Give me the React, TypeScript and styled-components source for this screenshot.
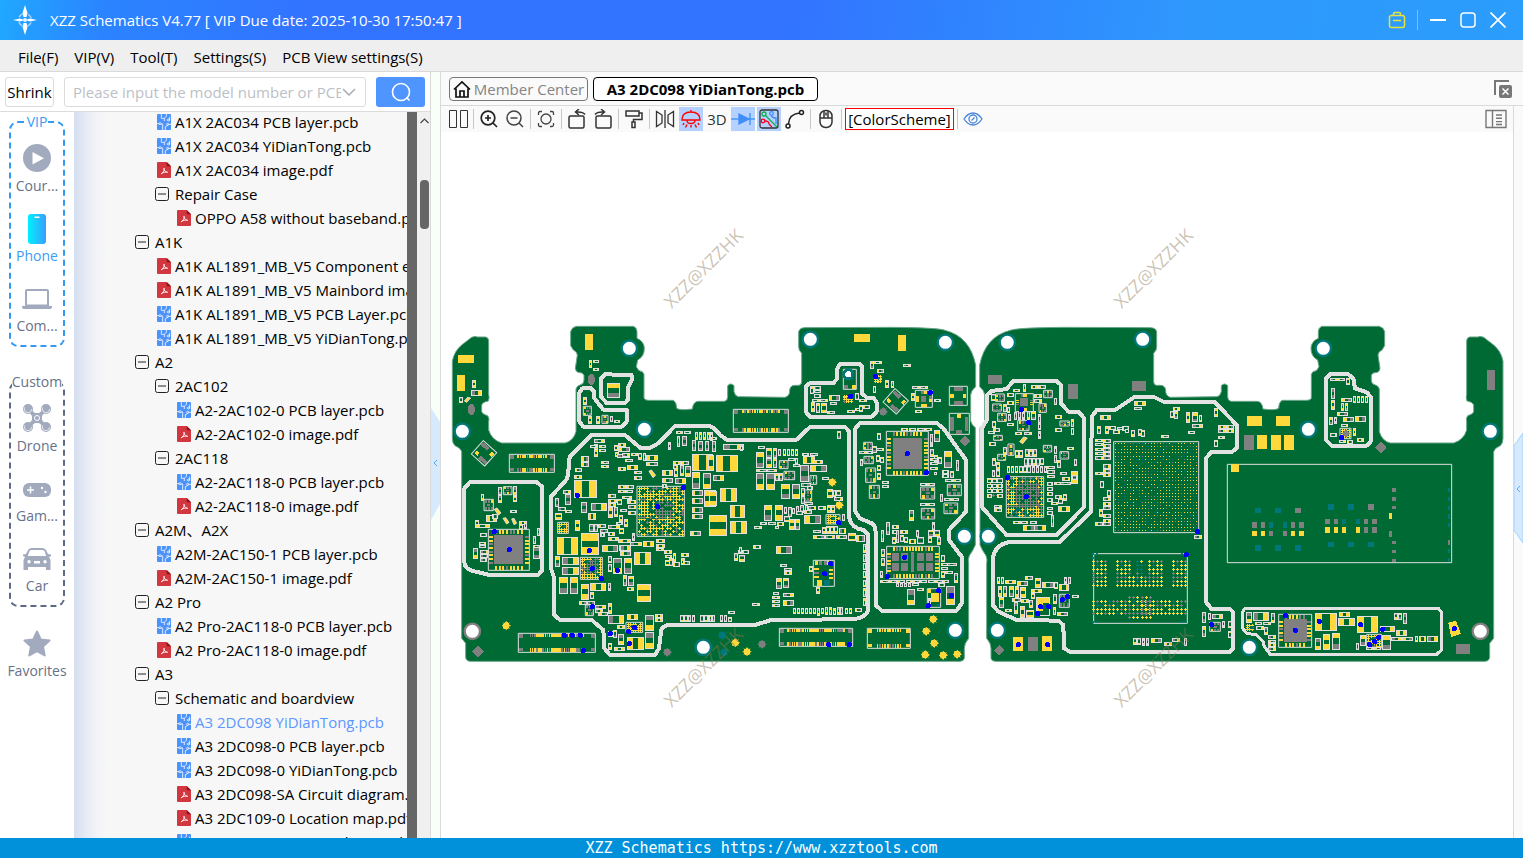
import React from "react";
import styled, { createGlobalStyle, css } from "styled-components";

const GlobalStyle = createGlobalStyle`
  * { box-sizing: border-box; }
  body { margin: 0; font-family: "Open Sans", "Noto Sans CJK SC", sans-serif; font-size: 15px; color: #000; background: #fff; }
  button, input { font: inherit; color: inherit; }
  button { padding: 0; border: 0; background: none; cursor: pointer; }
`;

/* ---------- frame ---------- */
const Window = styled.div`display: flex; flex-direction: column; height: 100vh; overflow: hidden;`;
const TitleBar = styled.header`
  display: flex; align-items: center; flex: none; height: 40px; padding: 0 15px 0 12px; color: #fff;
  background: linear-gradient(100deg, #20a8ff 0%, #2b84ff 7%, #3274ff 20%, #3274ff 52%, #2e98fd 78%, #2b9dfc 100%);
`;
const Title = styled.h1`flex: 1; margin: 0 0 0 12px; font-size: 15px; font-weight: 400; white-space: nowrap;`;
const WindowButtons = styled.div`display: flex; align-items: center; gap: 10px;`;
const WindowButton = styled.button`display: flex; width: 20px; height: 20px; align-items: center; justify-content: center;`;
const TitleRule = styled.span`width: 1px; height: 20px; background: #7cbdff;`;
const MenuBar = styled.nav`
  display: flex; align-items: center; flex: none; gap: 16px; height: 32px; padding: 2px 18px 0;
  background: #efefef; border-bottom: 1px solid #dadada;
`;
const MenuItem = styled.button`line-height: 24px; white-space: nowrap;`;
const Body = styled.div`display: flex; flex: 1; min-height: 0;`;
const Footer = styled.footer`
  flex: none; height: 20px; background: #0091da; color: #fff; text-align: center;
  font: 400 15px/20px "DejaVu Sans Mono", monospace;
`;

/* ---------- left panel ---------- */
const LeftPanel = styled.aside`display: flex; flex-direction: column; flex: none; width: 431px; border-right: 1px solid #dadada;`;
const SearchRow = styled.form`
  display: flex; align-items: center; flex: none; height: 40px; padding: 1px 5px 0; background: #fff; border-bottom: 1px solid #dcdcdc;
`;
const ShrinkButton = styled.button`width: 49px; height: 30px; border: 1px solid #dcdcdc; border-radius: 3px;`;
const SearchBox = styled.label`
  display: flex; align-items: center; flex: 1; height: 30px; margin: 0 10px; padding: 0 8px; border: 1px solid #dcdcdc; border-radius: 3px;
`;
const SearchInput = styled.input`
  flex: 1; min-width: 0; border: 0; padding: 0; outline: 0; background: none;
  &::placeholder { color: #bcbfc6; opacity: 1; }
`;
const SearchButton = styled.button`
  display: flex; align-items: center; justify-content: center; width: 49px; height: 30px; border-radius: 3px; background: #4f95ff;
`;
const LeftBody = styled.div`display: flex; flex: 1; min-height: 0;`;
const Categories = styled.div`flex: none; width: 74px; padding: 0 9px; background: #fff;`;
const Group = styled.fieldset<{ $active?: boolean }>`
  display: flex; flex-direction: column; gap: 13px; margin: 0 0 25px; padding: 7px 0 9px; min-width: 0;
  border: 2px dashed ${p => (p.$active ? "#3399f3" : "#5d6a85")}; border-radius: 9px;
  color: ${p => (p.$active ? "#3c9cf5" : "#67728a")};
`;
const Legend = styled.legend`margin: 0 auto; padding: 0; line-height: 20px; font-size: 14px;`;
const Category = styled.button<{ $active?: boolean }>`
  display: flex; flex-direction: column; align-items: center; gap: 4px; width: 100%; padding-top: 5px;
  font-size: 14px; line-height: 20px; white-space: nowrap; color: ${p => (p.$active ? "#3c9cf5" : "#67728a")};
  svg { flex: none; }
`;
const Favorites = styled.div`margin: -8px -9px 0;`;
const Tree = styled.ul`
  flex: 1; min-width: 0; margin: 0; padding: 0; list-style: none; overflow: hidden;
  background: linear-gradient(90deg, #d5dff0 0, #e6ebf4 12px, #f3f4f7 24px, #f7f7f7 34px);
`;
const Row = styled.li<{ $level: number }>`
  height: 24px; padding-left: ${p => 61 + p.$level * 20}px; overflow: hidden;
  &:first-child { margin-top: -1px; }
`;
const RowButton = styled.button<{ $selected?: boolean }>`
  display: flex; align-items: center; height: 22px; line-height: 22px; white-space: nowrap; color: ${p => (p.$selected ? "#5b98ff" : "#000")};
`;
const Slot = styled.span<{ $file?: boolean }>`display: flex; flex: none; width: 20px; padding-left: ${p => (p.$file ? 2 : 0)}px;`;
const DarkRail = styled.div`flex: none; width: 10px; background: #666;`;
const ScrollRail = styled.div`
  display: flex; flex-direction: column; align-items: center; flex: none; width: 13px; padding: 5px 0 0 1px; background: #f0f0f0;
`;
const Thumb = styled.div`width: 9px; height: 49px; margin-top: 54px; border-radius: 4px; background: #666;`;
const Strip = styled.div<{ $right?: boolean }>`
  flex: none; width: ${p => (p.$right ? 10 : 9)}px; padding-top: ${p => (p.$right ? 300 : 336)}px;
  background: ${p => (p.$right ? "#fafafa" : "#f8fff8")};
  ${p => p.$right && css`border-left: 1px solid #dadada;`}
`;
const Handle = styled.button`display: block; width: 9px;`;

/* ---------- viewer ---------- */
const Viewer = styled.main`display: flex; flex-direction: column; flex: 1; min-width: 0; border-left: 1px solid #dadada;`;
const Tabs = styled.div`
  display: flex; align-items: center; flex: none; gap: 5px; height: 34px; padding: 0 8px; background: #fafafa; border-bottom: 1px solid #dadada;
`;
const Tab = styled.button<{ $active?: boolean }>`
  display: flex; align-items: center; justify-content: center; gap: 3px; height: 24px; border: 1px solid ${p => (p.$active ? "#000" : "#777")};
  border-radius: 4px; color: ${p => (p.$active ? "#000" : "#858585")}; background: ${p => (p.$active ? "#fff" : "#fafafa")};
  font-weight: ${p => (p.$active ? 700 : 400)}; width: ${p => (p.$active ? 225 : 139)}px; white-space: nowrap;
`;
const Spacer = styled.span`flex: 1;`;
const ViewerBody = styled.div`display: flex; flex: 1; min-height: 0;`;
const Stage = styled.section`display: flex; flex-direction: column; flex: 1; min-width: 0;`;
const Toolbar = styled.div`
  display: flex; align-items: center; flex: none; gap: 2px; height: 26px; padding: 0 5px; background: #fafafa;
`;
const Tool = styled.button<{ $on?: boolean }>`
  display: flex; align-items: center; justify-content: center; width: 24px; height: 24px; color: #333; background: ${p => (p.$on ? "#b5d1ff" : "none")};
`;
const Sep = styled.span`width: 1px; height: 20px; margin: 0 1px; background: #c8c8c8;`;
const Scheme = styled.button`height: 22px; width: 109px; border: 1px solid #f00; background: #fff; line-height: 20px;`;
const Canvas = styled.div`flex: 1; min-height: 0; background: #fff; svg { display: block; width: 100%; height: 100%; }`;

/* ---------- icons ---------- */
const Svg = ({ s = 20, children, ...r }: any) => (
  <svg width={s} height={s} viewBox={`0 0 ${s} ${s}`} fill="none" stroke="currentColor" strokeWidth={1.5} aria-hidden="true" {...r}>{children}</svg>
);
const Logo = () => (
  <svg width={26} height={30} viewBox="0 0 26 30" aria-hidden="true">
    <path fill="#fff" d="M13 0 15.500 8 14.500 12h-3L10.500 8ZM13 30 15.500 22 14.500 18h-3L10.500 22ZM1 15 8 13.500 11 14.500v1L8 16.500ZM25 15 18 13.500 15 14.500v1L18 16.500Z" />
    <circle cx={13} cy={15} r={6.500} fill="none" stroke="#a5d4ff" strokeWidth={1.5} strokeDasharray="5 5.200" strokeDashoffset={-2.500} />
    <circle cx={13} cy={15} r={2} fill="#e6f3ff" />
  </svg>
);
const PcbFile = () => (
  <svg width={14} height={16} viewBox="0 0 42 48" aria-hidden="true">
    <rect width={42} height={48} rx={3} fill="#4c92fb" />
    <g fill="none" stroke="#fff" strokeWidth={2.4}>
      <path d="M13 0v13h9v8M0 29h6M12 30h5M17 48V30M28 0v7l-6 6M25 48V38l8-4M29 18h3M38 18V8M35 31h7" />
      <circle cx={9} cy={29} r={3} /><circle cx={35} cy={18} r={3} /><circle cx={32} cy={31} r={3} />
    </g>
  </svg>
);
const PdfFile = () => (
  <svg width={14} height={16} viewBox="0 0 42 48" aria-hidden="true">
    <path d="M3 0H29L42 13V45Q42 48 39 48H3Q0 48 0 45V3Q0 0 3 0Z" fill="#d2363f" />
    <path d="M29 0 42 13H32Q29 13 29 10Z" fill="#8e1119" />
    <path d="M20 19q3-2 2 4-1 7-10 13 2-3 9-5 8-2 11 0-7 0-11-8-2-3-1-4Z" fill="none" stroke="#fff" strokeWidth={2.6} />
  </svg>
);
const Minus = () => (
  <svg width={14} height={14} viewBox="0 0 14 14" fill="none" stroke="#222" aria-hidden="true"><rect x={0.5} y={0.5} width={13} height={13} rx={2} /><path d="M3 7h8" /></svg>
);
const G = "#a2aabe";
const CategoryIcon = ({ name }: { name: string }) => (
  <svg width={28} height={28} viewBox="0 0 28 28" fill={G} overflow="visible" aria-hidden="true">
    {name === "course" && <><circle cx={14} cy={14} r={14} /><path d="M9.5 8v12.500L21 14.200Z" fill="#fff" /></>}
    {name === "phone" && <><defs><linearGradient id="ph"><stop stopColor="#00f0ff" /><stop offset="1" stopColor="#3a9dff" /></linearGradient></defs>
      <rect x={5} width={18} height={30} rx={3} fill="url(#ph)" /><path d="M11.500 2.500h5v1.500h-5Z" fill="#fff" /></>}
    {name === "computer" && <><path fillRule="evenodd" d="M2 7q0-2 2-2H24q2 0 2 2V22H2ZM4 7V20.500H24V7Z" /><path d="M-1 22H29v1q0 2-2 2H1q-2 0-2-2Z" /></>}
    {name === "drone" && <><path d="M5 7 7 5l5 4h4l5-4 2 2-4 5v4l4 5-2 2-5-4h-4l-5 4-2-2 4-5v-4Z" />
      {[[5, 5], [23, 5], [5, 23], [23, 23]].map(([x, y]) => <g key={`${x}${y}`}><circle cx={x} cy={y} r={5} /><circle cx={x} cy={y} r={3.700} fill="none" stroke="#fff" strokeWidth={0.7} strokeDasharray="13 10" /></g>)}
      <circle cx={14} cy={14} r={2.500} stroke="#fff" /></>}
    {name === "game" && <><rect y={9} width={28} height={14} rx={6} /><path d="M4 16h7M7.500 12.500v7" stroke="#fff" strokeWidth={1.5} /><circle cx={19} cy={14} r={1.2} fill="#fff" /><circle cx={22.500} cy={18} r={1.2} fill="#fff" /></>}
    {name === "car" && <path fillRule="evenodd" transform="translate(0 2)" d="M0 8.500 3 8 5 4Q6 2 9 2H19Q22 2 23 4L25 8 28 8.500V10L26 11 27.500 14V24H23V21H5V24H.500V14L2 11 0 10ZM6.500 5 4.800 10H23.200L21.500 5Q21 4 19 4H9Q7 4 6.500 5ZM6 14a1.700 1.700 0 1 0 .1 0ZM22 14a1.700 1.700 0 1 0 .1 0ZM11 15v2.500h6V15Z" />}
    {name === "star" && <path stroke={G} strokeWidth={2} strokeLinejoin="round" transform="translate(0 1)" d="M14 1.500 17.700 9.500 26.500 10.500 20 16.500 21.700 25.500 14 21.200 6.300 25.500 8 16.500 1.500 10.500 10.300 9.500Z" />}
  </svg>
);

/* ---------- board drawing ---------- */
const Y = "#ffd83b", GR = "#808080", BD = "#006a35", SILK = "#e0e0e0", TEAL = "#00777b";
const tone: Record<string, string> = { y: Y, g: GR, t: TEAL, n: BD };

/* Two-pad parts: "x,y,w,h,pads[,axis]" separated by blanks. */
const Parts = ({ d }: { d: string }) => (
  <g>{d.trim().split(/\s+/).map((p, i) => {
    const a = p.split(","), [x, y, w, h] = a.map(Number), k = a[4] || "yy";
    const hor = a[5] ? a[5] === "h" : w > h;
    const t = 3, l = Math.round((hor ? w : h) * 0.34);
    return <g key={i}>
      <rect x={x} y={y} width={w} height={h} fill={SILK} />
      <rect x={x + t} y={y + t} width={w - t - t} height={h - t - t} fill={BD} />
      {hor ? <><rect x={x + t} y={y + t} width={l - t} height={h - t - t} fill={tone[k[0]]} /><rect x={x + w - l} y={y + t} width={l - t} height={h - t - t} fill={tone[k[1]]} /></>
        : <><rect x={x + t} y={y + t} width={w - t - t} height={l - t} fill={tone[k[0]]} /><rect x={x + t} y={y + h - l} width={w - t - t} height={l - t} fill={tone[k[1]]} /></>}
    </g>;
  })}</g>
);
/* Bare pads: "x,y,w,h,tone". */
const Pads = ({ d }: { d: string }) => (
  <g>{d.trim().split(/\s+/).map((p, i) => { const a = p.split(","); return <rect key={i} x={a[0]} y={a[1]} width={a[2]} height={a[3]} fill={tone[a[4] || "y"]} />; })}</g>
);
const Frame = ({ x, y, w, h }: any) => <rect x={x} y={y} width={w} height={h} fill={BD} stroke={SILK} strokeWidth={3} />;
const noise = (i: number, j: number) => { const v = Math.sin(i * 12.9898 + j * 78.233) * 43758.5453; return v - Math.floor(v); };
const Qfn = ({ x, y, w, h, n, m = n, die = true, pad = 6, len = 12, seed = 1 }: any) => {
  const c = (i: number, s: number) => (noise(i + seed, s) > 0.72 ? GR : Y);
  const cells: any[] = [];
  for (let i = 0; i < n; i++) { const px = x + 18 + ((w - 36) * (i + 0.5)) / n - pad / 2;
    cells.push(<rect key={`a${i}`} x={px} y={y + 2} width={pad} height={len} fill={c(i, 1)} />, <rect key={`b${i}`} x={px} y={y + h - len - 2} width={pad} height={len} fill={c(i, 2)} />); }
  for (let i = 0; i < m; i++) { const py = y + 18 + ((h - 36) * (i + 0.5)) / m - pad / 2;
    cells.push(<rect key={`c${i}`} x={x + 2} y={py} width={len} height={pad} fill={c(i, 3)} />, <rect key={`d${i}`} x={x + w - len - 2} y={py} width={len} height={pad} fill={c(i, 4)} />); }
  return <g><Frame x={x} y={y} w={w} h={h} />{cells}{die && <rect x={x + w * 0.15} y={y + h * 0.15} width={w * 0.7} height={h * 0.7} fill={GR} />}</g>;
};
/* Four- to eight-pin packages: "x,y,w,h". */
const Small = ({ d }: { d: string }) => <g>{d.trim().split(/\s+/).map((p, i) => {
  const [x, y, w, h] = p.split(",").map(Number);
  return <g key={i}><Frame x={x} y={y} w={w} h={h} />
    {[0.08, 0.4, 0.72].map((f, j) => <g key={j}><rect x={x + w * f} y={y + 2} width={w * 0.2} height={h * 0.26} fill={(i + j) % 3 ? GR : Y} /><rect x={x + w * f} y={y + h * 0.7} width={w * 0.2} height={h * 0.26} fill={(i + j) % 4 ? GR : Y} /></g>)}
    <rect x={x + w * 0.36} y={y + h * 0.42} width={w * 0.3} height={h * 0.16} fill={GR} /></g>;
})}</g>;
/* Ball grids. Balls snap to a 3-unit lattice, so that each keeps the same weight. */
const snap = (v: number) => Math.floor(v / 3) * 3;
const Bga = ({ x, y, w, h, nx, ny, dot = false, mix = 0.2, teal = 0.04, core = 0, gap = 0.06, frame = true }: any) => {
  const d: Record<string, string> = { [Y]: "", [GR]: "", [TEAL]: "" };
  for (let i = 0; i < nx; i++) for (let j = 0; j < ny; j++) {
    const v = noise(i + 3, j + 7); if (v < gap) continue;
    const inner = Math.hypot(i / (nx - 1) - 0.55, j / (ny - 1) - 0.45) < core;
    const c = inner || v > 1 - mix ? GR : v < gap + teal ? TEAL : Y;
    const px = snap(x + 6 + ((w - 12) * i) / (nx - 1)), py = snap(y + 6 + ((h - 12) * j) / (ny - 1));
    d[c] += dot ? `M${px} ${py}h3v3h-3Z` : `M${px - 3} ${py}h9v3h-9ZM${px} ${py - 3}h3v9h-3Z`;
  }
  return <g>{frame && <Frame x={x} y={y} w={w} h={h} />}{Object.entries(d).map(([c, p]) => <path key={c} d={p} fill={c} />)}</g>;
};
const Connector = ({ x, y, w, h, n, ends = GR, edge = 18 }: any) => <g><Frame x={x} y={y} w={w} h={h} />
  {Array.from({ length: n }, (_, i) => { const px = Math.round(x + edge + 8 + ((w - 2 * edge - 20) * i) / (n - 1));
    return <g key={i}><rect x={px} y={y + 2} width={5} height={10} fill={noise(i, x) > 0.75 ? GR : Y} /><rect x={px} y={y + h - 12} width={5} height={10} fill={noise(i, y) > 0.7 ? GR : Y} /></g>; })}
  {[x + 2, x + w - 14].map(px => <g key={px} fill={ends}><rect x={px} y={y + 3} width={12} height={10} /><rect x={px} y={y + h - 13} width={12} height={10} /></g>)}
</g>;
const Dots = ({ d, r = 8, fill = "#0000ff" }: any) => <g fill={fill}>{d.trim().split(/\s+/).map((p: string, i: number) => { const [x, y] = p.split(","); return <circle key={i} cx={x} cy={y} r={r} />; })}</g>;
const Star = ({ d, fill = Y }: any) => <g fill={fill} stroke={fill}>{d.trim().split(/\s+/).map((p: string, i: number) => { const [x, y] = p.split(",").map(Number); return <g key={i}><circle cx={x} cy={y} r={10} /><path strokeWidth={3} d={`M${x - 13} ${y}h26M${x} ${y - 13}v26M${x - 9} ${y - 9}l18 18M${x + 9} ${y - 9}l-18 18`} /></g>; })}</g>;
const Holes = ({ d, ring = TEAL }: any) => <g fill="#fff" stroke={ring} strokeWidth={7}>{d.trim().split(/\s+/).map((p: string, i: number) => { const [x, y] = p.split(","); return <circle key={i} cx={x} cy={y} r={23} />; })}</g>;
const Tilted = ({ x, y }: any) => <g transform={`translate(${x} ${y}) rotate(42)`}><Frame x={-27} y={-27} w={54} h={54} /><rect x={-24} y={-22} width={26} height={11} fill={GR} transform="translate(0 -1)" /><rect x={-2} y={12} width={26} height={11} fill={GR} /><rect x={-22} y={8} width={12} height={10} fill={Y} /><rect x={14} y={-20} width={10} height={12} fill={Y} /></g>;

const OUTLINE = "M22 138Q28 108 50 90L80 67Q90 62 98 66H122Q131 68 131 78V238Q134 248 130 258Q110 262 110 272V290Q112 298 128 302Q134 310 131 322V345Q140 375 170 384H360Q385 378 393 350V222Q396 212 405 210Q417 208 417 195V180Q412 172 399 172Q391 168 391 160L397 120Q396 110 385 105L377 92V50Q380 36 395 34H565Q576 38 576 50V70Q598 80 598 100Q598 125 578 135L574 155Q580 170 592 170L597 178V250Q600 256 610 256H685Q695 262 695 280Q705 287 742 282Q745 259 760 259H838Q848 257 848 245V212Q857 202 867 212V230Q870 243 880 245L1020 247Q1035 243 1034 225Q1036 211 1050 211H1062Q1070 209 1070 200V115Q1060 105 1061 95V50Q1064 38 1080 38L1335 37Q1480 38 1500 46Q1575 65 1592 150V215Q1577 228 1577 240V318Q1580 330 1591 338V690Q1585 705 1573 722Q1568 735 1571 745V970Q1558 985 1558 1000V1030Q1556 1039 1545 1039H75Q62 1037 62 1025V985L50 970V410Q48 400 30 392Q22 385 22 370Z";

const SheetA = () => <g>
  <Pads d="420,57,24,48 39,120,48,24 36,180,24,48" />
  <ellipse cx={79} cy={284} rx={11} ry={17} fill={GR} /><ellipse cx={439} cy={194} rx={11} ry={17} fill={GR} />
  <Connector x={193} y={418} w={135} h={54} n={13} edge={16} />
  <Connector x={220} y={955} w={231} h={57} n={26} edge={26} />
  <Qfn x={130} y={643} w={123} h={123} n={8} />
  <Tilted x={117} y={415} />
  <Bga x={576} y={514} w={142} h={150} nx={16} ny={17} mix={0.18} teal={0.07} core={0.2} gap={0.14} />
  <Bga x={406} y={727} w={66} h={66} nx={8} ny={8} core={0.38} />
  <Bga x={338} y={622} w={32} h={33} nx={4} ny={4} mix={0} />
  <Bga x={543} y={922} w={50} h={30} nx={6} ny={4} mix={0.1} />
  <Small d="415,274,24,27 117,553,28,34 471,301,18,24 175,515,26,24 421,870,24,32" />
  <Parts d="80,194,14,25,yy 78,226,33,16,gy 41,247,12,18,gy 432,135,10,23,yy 443,136,20,8,yt 443,160,20,8,yy
  485,204,39,46,yg,v 413,247,13,23,yy 429,304,12,23,yy 453,304,12,23,yy 494,304,9,18,gg 506,315,20,8,yy
  388,495,67,55,yy,h 409,562,18,31,gg 437,563,48,24,gy 337,666,63,53,yy,h 408,655,53,64,yy,v 471,690,49,22,yg 523,691,36,16,yy
  351,727,50,22,gy 351,757,50,24,gy 342,786,26,50,yg 375,786,23,50,yg 408,807,23,47,yy 435,804,49,23,yy 330,724,16,31,yg
  503,729,27,47,gy 537,729,23,47,yg 568,711,49,40,yy,h 577,808,40,52,yy,v 489,900,48,26,gy 546,897,32,17,yy 600,899,26,48,gy 600,951,26,50,gy 546,965,50,41,yy,h
  741,418,63,49,yy,h 741,471,24,50,yg 773,474,24,48,gy 778,525,34,50,yy,v 792,600,22,64,yy,v 740,525,33,17,yg 740,550,33,17,yg 740,577,33,16,yg 740,597,33,16,yg 735,648,33,16,yg
  651,465,32,18,yy 651,489,32,16,yg 690,489,32,17,gy 704,451,14,33,gy 720,453,17,32,gy 686,460,12,26,yy 651,508,14,12,yy
  447,372,32,13,gy 447,387,13,20,yy 435,391,22,9,gy 463,389,20,9,yg 447,402,13,24,yy 461,403,22,9,yg
  506,390,12,18,yy 519,384,24,11,yy 519,397,36,13,yg 509,412,14,14,yy 515,418,40,10,gy 531,415,24,12,gy 558,414,20,10,yy 580,414,10,20,gy 593,414,11,24,gg 604,420,34,17,yy 603,441,36,12,yg 539,432,24,10,yg
  408,423,24,18,yg 408,441,24,14,yg 468,438,24,10,yg 468,450,24,10,yy 390,460,20,11,yg 387,481,24,11,yy 519,456,24,12,yy 546,450,32,14,yy 567,468,24,10,yg 567,484,24,11,yg
  354,526,24,11,gy 361,538,16,31,gg 330,549,12,28,gg 340,576,24,11,gg 360,584,20,10,yg 330,594,20,20,yy 390,615,16,32,yy 428,594,26,20,yy 519,510,24,11,yy 519,524,24,11,yy 543,510,24,11,yg 543,524,22,11,yg
  489,537,24,11,yg 489,552,26,12,yy 489,565,24,11,yy 516,552,14,17,yg 531,543,30,10,yy 546,553,14,14,yy 550,555,24,12,yy 550,570,24,12,gy 550,588,24,12,yg 490,575,13,34,yy 507,576,13,31,gy 525,582,22,10,yg 522,600,12,20,yy 537,612,12,24,yy 489,630,36,12,gy 513,621,22,10,yy 522,640,14,18,yy 489,651,20,12,yy 489,666,34,13,yy 519,672,40,12,yy
  432,628,14,22,gg 447,628,12,22,gg 459,627,24,12,yg 465,642,24,12,gg 465,655,15,10,yy 556,680,36,14,gy 561,655,9,23,yy 525,690,32,17,gy 525,709,32,13,yg 594,678,32,18,yy
  633,672,26,13,yy 633,686,26,13,yy 633,699,24,10,yy 657,706,24,12,yy 660,720,22,10,yy 660,735,14,18,yy 672,730,12,24,yg 684,715,10,26,yy 708,715,24,12,yy 708,730,12,20,yy 714,738,20,12,yg 684,741,22,14,yg
  489,724,12,20,gy 489,748,12,24,gy 533,780,14,32,yg 549,782,17,30,yg 546,816,20,12,yy 489,804,9,24,gy 434,832,12,20,yg 402,858,24,12,yg 426,858,24,12,gg 450,870,34,12,gy 450,883,24,12,gy 460,890,30,12,yg 489,864,12,32,yy
  489,947,14,20,yg 505,944,12,24,yg 519,957,18,32,gy 489,984,12,20,yy 507,995,34,13,yy 516,930,24,12,yy
  90,615,12,22,yy 90,627,46,12,yy 122,600,34,20,yy 107,537,10,20,gy 159,516,12,24,gg 159,540,12,24,gy 204,514,12,28,gy 204,542,12,18,yy 195,585,22,10,yy 222,618,24,12,yy 222,628,12,18,yy 236,624,9,18,gy 105,654,22,12,gg 102,680,22,10,gy 102,690,22,10,gg 105,706,26,12,gy 106,718,24,10,gg 106,729,20,12,gy 84,699,14,32,gy 264,663,9,24,gg 264,690,20,10,yg 264,697,21,34,gg 276,640,9,22,gg 140,598,18,14,yg
  630,897,24,12,yy 630,909,24,12,yy 705,899,12,22,gy 717,899,12,22,gy 729,899,10,22,yy 740,899,9,22,yg 765,899,12,22,gg 777,899,12,22,gy 790,899,12,22,gg
  693,348,20,10,yy 717,348,22,10,gy 697,362,9,33,gg 712,364,15,30,gg 740,375,13,34,gg 760,379,13,30,gg 780,379,13,30,gg 750,352,9,22,gy 762,352,9,22,yg 774,352,9,22,gy 787,352,9,22,yg 670,382,9,22,yy 684,437,24,12,yy 708,437,24,12,yg 684,450,14,12,gy" />
  <g fill={Y} stroke={SILK} strokeWidth={3}><path d="M58 258 68 247 77 249 65 262ZM148 583 156 579 168 594 160 600ZM174 610 182 608 192 622 185 627ZM200 612 207 610 215 625 207 629ZM612 469 619 465 632 481 624 488Z" /></g>
  <Star d="184,932" /><Star d="667,1012" fill={GR} /><path d="M100 992 118 1010 100 1028 82 1010Z" fill={GR} />
  <Dots d="148,650 193,704 397,541 715,518 638,575 433,707 442,761 470,791 517,766 442,875 496,956 551,950 569,938 553,986 358,961 382,961 406,961 415,1007" />
</g>;

const SheetB = () => <g>
  <Pads d="432,57,48,24 564,60,24,48" />
  <Connector x={70} y={283} w={165} h={69} n={16} /><Connector x={208} y={940} w={220} h={54} n={27} edge={16} /><Connector x={472} y={940} w={129} h={60} n={10} ends={Y} edge={20} />
  <Qfn x={529} y={349} w={126} h={132} n={9} /><Qfn x={530} y={694} w={158} h={97} n={13} m={6} die={false} seed={4} />
  <Pads d="545,713,22,25,g 572,713,22,25,g 620,713,22,25,g 648,713,22,25,g 545,743,22,25,g 572,743,22,25,g 620,743,22,25,g 648,743,22,25,g 602,710,10,60,g" />
  <Frame x={310} y={736} w={63} h={78} /><Pads d="316,738,9,12 328,738,9,12,g 341,738,9,12,g 352,738,9,12 313,758,14,6 313,770,14,6,g 313,782,14,6 356,762,14,6 356,774,14,6 356,786,14,6 322,796,14,16 341,796,9,16,t 352,796,9,16,t" />
  <Qfn x={616} y={226} w={51} h={51} n={2} len={8} pad={9} die={false} /><rect x={633} y={243} width={16} height={18} fill={GR} />
  <Frame x={718} y={214} w={54} h={57} /><Pads d="732,216,26,12,g 732,257,26,12,g 721,236,10,14 759,236,10,14" />
  <Frame x={718} y={295} w={60} h={63} /><Pads d="721,306,10,42,g 765,306,10,42,g 741,297,11,12 737,346,20,12,g" />
  <Tilted x={557} y={259} />
  <Frame x={400} y={163} w={39} h={60} /><Pads d="402,210,12,12,g 425,210,12,12" />
  <Bga x={397} y={237} w={32} h={28} nx={4} ny={4} mix={0.2} frame={false} /><Bga x={490} y={178} w={28} h={28} nx={4} ny={4} mix={0} frame={false} /><Bga x={348} y={599} w={42} h={28} nx={5} ny={4} mix={0.1} />
  <Small d="461,382,26,22 462,424,28,22 467,459,30,43 478,511,30,39 632,516,42,36 712,508,42,34 702,564,41,32 634,580,40,32 208,437,26,24 222,469,32,25 283,525,22,33 300,482,20,26" />
  <Frame x={652} y={821} w={40} h={56} /><Pads d="663,834,24,27 654,823,8,10 681,823,8,10 654,866,8,9,t 681,866,8,9,t" />
  <Parts d="18,420,65,52,yy,h -6,420,17,48,yy,v 30,520,50,40,yy,h 61,570,45,40,yy,h -2,527,24,47,yy,v -4,600,54,64,yy,v 60,617,50,39,yy,h 9,480,32,17,gy 6,378,12,32,gg 38,388,63,18,gy 0,352,10,26,yy 4,366,16,9,yy 90,388,10,20,yy
  139,411,24,48,yg 139,474,24,50,gy 168,474,26,50,gy 169,399,18,30,yg 188,399,14,30,yg 169,428,18,30,gy 188,428,14,30,yg 144,393,22,9,gg 163,570,24,47,yg 194,570,24,47,yy 214,507,25,46,yg 246,507,24,46,gy 271,450,25,52,gg 280,424,34,22,yy 300,450,50,22,yg 283,600,50,27,yg 238,612,17,32,yy 255,612,15,32,yg
  139,462,32,10,yg 171,462,30,10,gy 205,402,9,22,gg 218,402,9,22,gy 230,402,9,22,gg 242,402,9,22,yg 256,402,9,22,yy 256,428,9,18,gg 196,475,10,22,yg 208,475,10,22,yg 233,430,22,9,gg 250,448,20,9,gg 276,413,22,9,yy 300,413,24,9,gg 310,436,30,11,yy 336,486,22,9,gg 272,505,30,10,gg 273,520,12,22,gy 273,544,12,22,gg 292,512,16,12,gy 283,560,26,10,gg
  222,576,10,22,gy 233,576,12,30,gg 245,578,10,20,gg 258,574,10,24,gg 270,571,12,22,gg 284,571,10,22,gg 295,574,24,10,gy 323,574,24,10,gy 258,588,22,11,gg 283,586,22,10,yg 223,602,16,20,gy 132,632,24,9,gy 149,621,22,9,yy 173,621,24,9,gg 200,621,22,11,yy 196,632,12,9,gy
  350,523,20,27,yy 368,524,10,22,gy 378,524,14,18,yg 373,546,26,11,gy 352,571,12,22,yy 364,571,12,22,yy 396,596,9,22,gg 310,645,22,10,gg 336,636,12,20,yy 349,632,10,24,yy 360,632,12,24,yy 373,632,12,24,gy 388,638,20,18,gy 310,659,34,14,yg 344,659,32,14,gy 378,659,33,14,yg 414,655,24,24,yy 438,659,28,22,yg
  459,687,9,28,gy 459,718,9,22,gg 459,743,9,22,gg 459,768,9,22,gy 459,795,9,22,gy 459,820,9,26,yg 459,850,9,24,yg
  72,714,12,24,gy 84,705,12,12,yg 88,695,9,20,gg 96,705,22,12,yg 86,720,18,20,gy 130,690,24,11,yy 198,693,47,23,yg 210,747,20,9,yg 222,760,24,9,gg 222,768,24,11,yy 199,789,16,34,yg 219,789,17,30,yg 188,832,20,9,gg 186,843,24,9,yy 186,856,24,9,yg 186,868,24,9,yg 219,834,32,13,gy 219,856,32,16,yg 126,865,24,9,gy 54,888,22,9,yg 42,900,10,22,gg 30,900,10,22,gy 54,906,12,14,yg 6,900,10,20,gg -4,900,9,20,yg
  249,880,9,18,gy 260,880,9,18,gy 272,880,9,18,gy 284,880,9,18,gg 297,880,9,18,gy 310,880,9,18,gy 322,880,9,22,gy 334,880,9,18,gy 344,877,9,22,gy 356,877,9,22,yg 368,880,9,20,yg 380,877,9,22,gy 391,877,9,22,gg 404,880,9,18,yg 416,880,9,18,yy 434,880,22,10,yg 297,752,12,20,yy 318,816,11,20,yy 381,347,11,24,yg
  480,138,12,24,yg 489,138,26,9,yy 501,162,20,11,yg 579,148,24,9,gy 526,196,10,22,yy 542,199,9,20,gy 489,213,10,22,gg 300,214,11,24,yg 312,214,22,11,gg 312,226,22,9,gg 312,237,22,11,ty 305,252,24,9,gy 330,252,24,9,gy 356,240,33,17,yg 303,262,12,28,yy 318,264,12,30,yg 333,264,18,30,yy 352,287,22,9,yg 360,262,20,9,gg 434,234,12,22,gg 446,252,24,9,yy 434,278,24,9,yg 447,270,12,22,yy 459,270,22,12,yg 410,284,24,9,yy
  501,354,12,20,yt 572,338,22,9,yy 597,338,22,9,yg 620,338,24,9,yg 645,338,22,9,yy 672,346,17,34,yg 659,357,9,38,gy 603,234,12,24,yy 606,213,24,10,gy 630,213,24,10,gy 614,285,22,9,yy 672,252,22,9,yy
  446,408,26,10,gy 470,408,18,10,gy 486,393,14,20,yg 499,398,24,10,gy 499,420,12,22,yy 511,426,12,18,yg 450,432,9,20,yg 501,449,12,18,yy 501,474,12,20,yy 515,498,22,9,gy 515,510,22,9,gy 659,402,12,24,gy 671,420,14,22,yy 659,430,26,9,yg 659,442,24,9,yg 659,456,24,9,gy 672,471,10,9,yy 684,426,12,20,yg 703,408,22,50,yg 738,435,10,32,gg 696,465,22,11,yy 696,477,22,11,yy 720,468,12,20,yg 706,493,24,9,gy 730,493,24,9,yg 630,505,22,9,gy 652,505,22,9,yg 690,538,9,22,gg 702,550,22,9,gy 724,550,22,9,yg 630,565,22,9,gy 652,565,24,9,yg 598,586,14,32,gy
  514,645,9,36,gg 527,622,12,38,gg 546,630,20,11,yy 546,645,20,11,yy 559,645,9,40,gg 571,645,22,11,yy 569,660,12,22,yg 583,667,12,18,gy 596,672,22,14,yy 618,645,9,20,yg 620,666,22,22,gg 666,622,9,24,yg 655,645,16,20,yg 672,645,18,20,gy 655,667,11,18,yy 680,667,12,22,gy 546,667,12,20,yy 514,703,11,22,gy 514,730,12,22,gy 692,720,12,22,gy 692,744,22,9,yg 692,756,22,9,gg 710,744,30,9,gg 692,768,14,20,yy 706,768,24,9,yg 510,768,10,20,gy 732,774,11,30,gy
  510,794,26,9,yg 536,794,26,9,yg 562,794,24,9,yg 587,794,20,9,gy 607,794,22,9,yg 630,794,22,9,yg 653,794,22,9,gg 676,794,22,9,yg 698,794,20,9,yg 557,805,9,12,gg 569,805,9,12,gg 581,805,9,12,gy 593,805,9,12,gg 605,805,22,9,gg 683,805,22,12,yg 592,823,22,48,gy 620,820,22,9,gy 709,814,27,57,gy 654,850,9,20,yg" />
  <Star d="367,502 388,571 76,983 111,1010 670,913 649,949 673,985 646,1019 700,1021 742,1018" />
  <Star d="37,961 42,1012 -4,996" fill={TEAL} /><Star d="156,988 520,290" fill={GR} /><path d="M765 362 781 378 765 394 749 378Z" fill={GR} />
  <circle cx={415} cy={178} r={18} fill={TEAL} /><circle cx={415} cy={178} r={9} fill="#fff" />
  <Dots d="497,185 422,244 661,233 592,416 649,473 386,623 362,746 344,776 584,727 532,785 686,827 724,842 655,872 356,989 418,989" />
</g>;

const SheetC = () => <g>
  <Pads d="39,180,42,27,g 279,207,30,45,g 471,198,42,30,g 114,966,30,42 159,966,30,42,g 201,963,30,45 " />
  <Qfn x={121} y={236} w={54} h={54} n={3} len={9} pad={5} die={false} /><rect x={135} y={249} width={24} height={24} fill={GR} />
  <Bga x={94} y={485} w={112} h={122} nx={13} ny={14} mix={0.24} teal={0.1} core={0.38} />
  <Bga x={416} y={380} w={255} h={273} nx={28} ny={29} dot mix={0.18} teal={0.2} gap={0.05} />
  <Frame x={356} y={716} w={281} h={209} />
  <Bga x={350} y={734} w={48} h={82} nx={4} ny={7} mix={0.4} frame={false} gap={0} />
  <Bga x={421} y={734} w={48} h={82} nx={4} ny={7} mix={0.3} frame={false} gap={0} /><Bga x={481} y={734} w={24} h={70} nx={2} ny={6} teal={0.7} frame={false} gap={0} />
  <Bga x={517} y={734} w={48} h={82} nx={4} ny={7} mix={0.4} frame={false} gap={0} /><Bga x={590} y={734} w={48} h={82} nx={4} ny={7} mix={0.3} frame={false} gap={0} />
  <Bga x={469} y={782} w={48} h={34} nx={4} ny={3} mix={0.3} frame={false} gap={0} />
  <Bga x={350} y={853} w={288} h={48} nx={24} ny={4} mix={0.25} teal={0.08} frame={false} gap={0.01} /><Bga x={457} y={841} w={76} h={72} nx={6} ny={6} mix={0.5} frame={false} gap={0} />
  <Pads d="352,714,6,6,t 364,714,6,6,t 618,714,6,6,t 352,917,6,6,t 364,917,6,6,t 618,917,6,6,t 630,917,6,6,t 352,726,6,6,t" />
  <Small d="62,237,26,22 53,267,26,21 68,295,26,24 128,317,34,30 192,266,22,26 206,226,26,22 56,361,26,15 255,318,28,15 205,391,25,20 255,410,26,22 68,418,24,18 99,387,18,34 704,922,32,27 253,838,30,39" />
  <Bga x={40} y={490} w={44} h={56} nx={4} ny={5} frame={false} />
  <Parts d="143,207,9,23,gy 168,210,20,11,yy 190,210,22,11,yg 113,222,22,9,yy 48,237,14,22,gy 95,234,22,11,yg 95,258,22,12,yy 84,267,12,24,yg 96,275,10,18,gy 237,249,9,20,tg 178,237,22,11,yy 178,252,22,11,gy 117,291,9,24,gg 130,289,9,26,gy 142,289,9,26,yy 155,289,9,26,gy 168,289,14,26,yg 189,297,10,26,yg 189,322,10,24,yy 189,348,10,24,yy 240,300,22,12,yy 240,338,22,12,yg 288,312,9,24,yg 288,338,9,22,gg 99,297,9,20,yg 51,318,12,22,yy 55,338,20,12,yg 39,348,22,9,gy 42,382,22,10,yg 119,352,22,9,yy 148,352,22,9,gy 96,324,22,9,gy
  84,397,11,22,gy 120,404,12,24,yy 133,404,12,24,yy 149,402,12,24,gy 162,402,12,24,yg 175,402,12,24,gy 148,428,11,24,gg 160,428,11,24,gg 172,428,11,24,gy 184,428,11,24,gg 196,428,11,22,gy 96,452,10,22,yg 108,452,10,22,yg 120,452,10,22,gy 133,452,10,22,gy 145,452,10,22,gy 157,452,10,22,gg 170,452,10,22,yg 182,452,10,22,yg 194,452,10,22,yg 206,452,10,22,yy 215,452,24,10,yg 215,466,24,10,gg 215,480,24,10,yg 237,394,9,24,yg 237,420,9,24,gg 51,430,12,24,yg 62,442,12,22,yy 51,465,10,22,yg 64,465,10,22,gy 275,395,22,10,yy 297,432,9,22,gy 245,435,12,24,yg 255,470,22,11,yg 262,487,24,10,yy 288,468,20,38,yy 291,480,14,14,gg 238,500,22,11,yg 255,500,32,9,gg
  215,500,20,14,gy 215,516,20,13,gg 215,531,20,13,yg 215,548,20,13,gy 228,560,22,11,yy 215,575,20,11,gg 215,588,20,11,gg 228,600,9,36,gg 240,540,20,11,gy 250,548,14,20,yg 264,537,12,20,yy 249,573,36,17,yy 57,570,24,10,gy 57,580,24,10,yg 113,617,24,10,yy 138,617,22,10,gy 165,617,22,10,gy 143,629,36,18,yg 178,629,34,18,gy
  36,489,14,16,yg 36,506,14,14,gy 36,521,14,14,yg 36,536,14,12,yg 52,489,14,16,yy 52,506,14,14,yy 52,521,14,14,yy 67,489,16,16,gy 67,506,16,14,yy 67,521,16,14,yg 67,536,16,12,yg
  375,300,32,14,yy 367,333,10,24,yg 390,333,12,24,yy 402,333,22,11,yg 414,345,22,11,gy 426,335,24,9,gy 441,333,22,14,yg 451,342,12,12,gg 468,345,11,20,gy 489,342,12,20,gy 498,345,12,22,yg 478,258,34,14,yy 477,276,24,9,gg 585,288,11,22,gy 598,288,11,24,yg 594,276,20,12,yy 634,292,11,31,yy 651,292,18,30,yg 671,300,10,22,gy 651,326,32,12,gy 558,360,24,9,yg 639,348,22,9,yg 717,280,11,25,yy 729,330,24,11,yy 753,330,24,11,yg 729,342,24,11,gy 753,342,24,11,yy 729,364,20,9,yy 717,375,11,21,yg
  360,372,26,9,yy 384,372,24,12,yg 360,384,26,9,gy 384,386,24,12,yg 360,398,26,9,yy 384,400,24,10,gg 360,411,26,10,yg 384,411,24,12,yg 360,424,26,10,gy 384,424,24,10,gg 384,447,24,15,gy 384,462,24,12,yg 360,471,24,9,yy 384,474,24,12,yy 376,497,10,22,gg 396,525,11,22,gy 384,545,24,14,gy 384,560,24,12,yy 384,572,24,12,gg 372,582,11,24,yy 384,597,24,13,yg 384,612,24,13,yy 360,620,24,12,yg 384,620,24,12,gg 657,660,24,11,gy
  65,786,9,20,gy 77,786,9,20,gg 90,795,32,11,yy 126,797,33,16,yg 150,784,24,10,yg 180,789,18,29,yy 201,801,36,17,yg 237,801,12,22,gy 252,807,30,22,yy 267,786,10,20,yy 279,786,9,20,gg 68,812,14,34,yy 83,814,14,32,gy 102,814,14,32,yg 120,814,12,36,yy 135,817,17,32,yy 168,822,34,12,yy 111,850,26,11,yg 138,852,24,11,yy 73,845,14,33,yg 90,882,20,9,yy 117,862,12,34,gy 135,872,15,36,yy 154,884,22,24,yy 162,855,12,24,gy 168,833,12,18,yy 234,836,12,32,gy 234,877,10,22,yg 246,892,32,11,yg 290,840,22,9,gy 184,845,40,57,yn,v
  474,969,11,20,gy 486,969,11,22,gy 500,969,10,24,yy 513,969,10,24,gy 528,969,32,14,yg 568,982,22,10,yy 592,969,22,11,gy 627,969,10,24,gg 681,892,13,32,gg 698,894,10,20,gg 711,897,32,15,gy 681,933,13,32,yg 741,918,10,20,gy 759,918,11,22,gy 759,948,11,22,yg" />
  <g fill={Y} stroke={SILK} strokeWidth={3}><path d="M134 380 146 366 157 369 143 386Z" /></g><path d="M73 990 89 1006 73 1022 57 1006Z" fill={GR} />
  <Pads d="187,862,18,27" />
  <Dots d="139,284 161,323 97,488 154,545 668,650 634,719 197,875 221,875 188,896 262,854 278,845 130,989 218,989 710,929" />
</g>;

const SheetD = () => <g>
  <Pads d="21,303,45,30 108,303,42,30 12,360,30,45,g 51,360,30,42 93,360,30,45 132,360,30,45 741,165,24,60,g 648,987,42,30,g" />
  <rect x={-38} y={448} width={673} height={295} fill="none" stroke={SILK} strokeWidth={3} />
  <Pads d="-28,448,26,22 45,579,18,15,t 105,579,18,15,t 165,579,18,15,g 36,621,15,18,g 63,621,12,18,g 87,621,12,18,t 129,621,12,18,t 153,621,12,18,g 177,621,15,18,g 36,648,15,15 63,648,12,15 87,648,12,15,g 129,648,12,15,g 153,648,12,15 177,648,15,15 45,690,18,18,t 105,690,18,18,t 165,690,18,18,t
  264,567,18,18,t 324,567,18,18,t 384,567,18,18,g 255,612,15,15,g 282,612,12,15,g 306,612,12,15,t 348,612,12,15,t 372,612,12,15,g 396,612,15,15,g 255,636,15,18 282,636,12,18 306,636,12,18 348,636,12,18 372,636,12,18,g 396,636,15,18,g 264,681,18,15,t 324,681,18,15,t 384,681,18,15,t
  456,519,12,12,g 456,546,12,12,g 456,573,12,9,g 447,594,9,18 447,648,9,18,g 456,678,12,9,g 456,705,12,9,g 456,732,12,9,g 624,519,6,12,t 624,546,6,12,t 624,573,6,12,t 624,597,6,14,t 624,624,6,12,t 624,675,6,15,g 624,702,6,12,t 624,729,6,12,t" />
  <Qfn x={116} y={898} w={99} h={99} n={6} /><Bga x={380} y={958} w={44} h={42} nx={5} ny={5} mix={0.2} /><Bga x={300} y={340} w={33} h={31} nx={4} ny={4} mix={0} />
  <Bga x={16} y={924} w={26} h={26} nx={3} ny={3} mix={0} frame={false} />
  <path d="M318 345 330 357 318 369 306 357ZM423 380 440 397 423 415 406 397Z" fill={GR} />
  <Parts d="270,188,24,9,gy 292,188,22,9,yg 317,188,13,22,yy 273,219,12,32,gg 273,254,12,31,yy 303,249,32,11,yg 338,243,10,22,gy 350,243,10,22,yg 362,243,10,22,yg 374,243,10,22,yg 303,264,10,23,gy 315,264,9,23,yg 290,291,33,11,yg 309,306,33,16,yg 345,303,33,17,yg 268,306,11,23,yg 281,306,10,20,yy 303,328,22,9,gy 339,339,9,23,yy 270,354,22,11,gy 351,369,20,11,yy 297,375,20,9,gy 320,375,18,11,yg
  18,890,17,34,gy 38,890,49,28,gy 93,894,11,31,gy 45,922,22,9,yg 68,922,24,9,gy 47,933,24,11,gy 72,936,11,23,gy 84,961,23,11,gy 84,974,23,11,yg 84,985,23,11,yy 84,996,23,11,gy 225,894,66,53,yy,h 297,892,33,14,yy 294,908,50,24,yy 249,958,21,46,yy 276,953,23,51,yg 225,970,18,34,gy 351,903,63,50,yy,h 420,934,44,18,yy 426,961,27,45,yg 361,961,16,32,yg 347,983,10,22,gg 468,945,32,17,yy 462,894,12,20,gy 474,894,12,20,yg 488,894,12,32,gg 453,966,34,11,gy 486,966,34,11,yg 525,962,10,18,gy 537,962,22,18,yy 561,963,32,17,gy 378,997,24,9,gy 403,997,20,9,yg" />
  <path d="M625 923 648 917 663 957 633 966Z" fill={Y} />
  <Dots d="305,368 136,902 166,946 238,919 362,929 428,943 416,967 404,980 389,989 643,941" />
</g>;

const Board = () => (
  <svg viewBox="441 132 1072 706" role="img" aria-label="A3 2DC098 board view" shapeRendering="crispEdges">
    <g transform="translate(445 315) scale(.33333)" strokeLinejoin="round">
      <g fill={BD} stroke="#69a78a" strokeWidth={3} shapeRendering="auto"><path d={OUTLINE} /><path d={OUTLINE} transform="translate(3196 0) scale(-1 1)" /></g>
      <SheetA />
      <g transform="translate(795 0)"><SheetB /></g>
      <g transform="translate(1590 0)"><SheetC /></g>
      <g transform="translate(2385 0)"><SheetD /></g>
      <g fill="none" stroke="#e2e2e2" strokeWidth={12}>
        <path d="M75 501H275L292 516V765L280 779H130L80 767Q58 760 58 740V520Z M480 178L560 180V195L548 220V255L540 264H485L468 245V190Z M402 235L412 220H438L448 230V250L475 284H545V320L530 335H415L402 318Z" />
        <path d="M318 545L350 510Q370 495 370 470L374 425L440 360H540L585 398H615L640 385L690 333H795Q810 340 825 360L845 374H1055L1095 336H1200L1213 350V610Q1220 640 1255 645L1270 660V885Q1265 905 1230 912L975 916L930 930H670Q648 934 648 950L642 1000L630 1020H495L478 1000L475 945L440 915H345L328 900V790L318 760Z" />
        <path transform="translate(795 0)" d="M287 215L300 204H370L382 190V160L390 147H450L456 155V235L470 248H490L500 262V290L485 305H300L287 290Z M436 340L450 324H680L700 340L768 435V590L717 645V675L755 725V865L740 887H515L497 870V650Q495 625 480 623L450 610L436 590Z" />
        <path transform="translate(1590 0)" d="M50 228L95 222L115 198H245L258 210V265L280 290H310L328 310V575L245 660H95L20 575V340L36 315V240Z M350 305L365 285H420L480 245H535L565 260L720 262L785 330V400L770 411H710L692 430V860L710 882H765L775 892V1000L765 1010H285L267 1000L265 930L250 917L125 915L70 890L53 870V730Q60 690 100 682L255 680L348 590Z" />
        <path transform="translate(2385 0)" d="M270 178H325L340 190L345 220L380 232L392 245V380L380 392H275L258 375V190Z" />
        <path strokeWidth={9} transform="translate(2385 0)" d="M15 880H595L604 890V1005L590 1018H90L70 990V980L50 960L20 955L8 940V890Z" />
      </g>
      <g shapeRendering="auto">
        <Holes d="52,349 553,100 598,343 775,997 1096,73 1501,82 1558,664 1531,946 1687,82 2093,73 1630,664 1657,946 2413,997 2635,100 2590,343 3136,349" />
        <Holes d="82,949 3106,949" ring={GR} />
      </g>
    </g>
    <g fill="#8c7a5c" fillOpacity={0.45} fontSize={18} textAnchor="middle" shapeRendering="auto">
      {[[703, 268], [1153, 268], [703, 667], [1153, 667]].map(([x, y]) => <text key={`${x}-${y}`} transform={`translate(${x + 5} ${y + 5}) rotate(-45)`}>XZZ@XZZHK</text>)}
    </g>
  </svg>
);

/* ---------- data ---------- */
type Node = [level: number, kind: "pcb" | "pdf" | "dir", name: string];
const NODES: Node[] = [
  [1, "pcb", "A1X 2AC034 PCB layer.pcb"], [1, "pcb", "A1X 2AC034 YiDianTong.pcb"], [1, "pdf", "A1X 2AC034 image.pdf"],
  [1, "dir", "Repair Case"], [2, "pdf", "OPPO A58 without baseband.pdf"], [0, "dir", "A1K"],
  [1, "pdf", "A1K AL1891_MB_V5 Component exploded.pdf"], [1, "pdf", "A1K AL1891_MB_V5 Mainbord image.pdf"],
  [1, "pcb", "A1K AL1891_MB_V5 PCB Layer.pcb"], [1, "pcb", "A1K AL1891_MB_V5 YiDianTong.pcb"],
  [0, "dir", "A2"], [1, "dir", "2AC102"], [2, "pcb", "A2-2AC102-0 PCB layer.pcb"], [2, "pdf", "A2-2AC102-0 image.pdf"],
  [1, "dir", "2AC118"], [2, "pcb", "A2-2AC118-0 PCB layer.pcb"], [2, "pdf", "A2-2AC118-0 image.pdf"],
  [0, "dir", "A2M、A2X"], [1, "pcb", "A2M-2AC150-1 PCB layer.pcb"], [1, "pdf", "A2M-2AC150-1 image.pdf"],
  [0, "dir", "A2 Pro"], [1, "pcb", "A2 Pro-2AC118-0 PCB layer.pcb"], [1, "pdf", "A2 Pro-2AC118-0 image.pdf"],
  [0, "dir", "A3"], [1, "dir", "Schematic and boardview"], [2, "pcb", "A3 2DC098 YiDianTong.pcb"], [2, "pcb", "A3 2DC098-0 PCB layer.pcb"],
  [2, "pcb", "A3 2DC098-0 YiDianTong.pcb"], [2, "pdf", "A3 2DC098-SA Circuit diagram.pdf"], [2, "pdf", "A3 2DC109-0 Location map.pdf"], [2, "pcb", "A3 DC-0AC173-0 PCB layer.pcb"],
];
const SELECTED = "A3 2DC098 YiDianTong.pcb";

export default function App() {
  return (
    <Window>
      <GlobalStyle />
      <TitleBar>
        <Logo />
        <Title>XZZ Schematics V4.77 [ VIP Due date: 2025-10-30 17:50:47 ]</Title>
        <WindowButtons>
          <WindowButton aria-label="Account"><Svg s={18} stroke="#e6e23c"><rect x={1.500} y={4.500} width={15} height={12} rx={2} /><path d="M5.500 4.500V3q0-1.500 1.500-1.500h4q1.500 0 1.500 1.500v1.500M5 9.500h8" /></Svg></WindowButton>
          <TitleRule />
          <WindowButton aria-label="Minimize"><Svg s={16} strokeWidth={2}><path d="M0 8h16" /></Svg></WindowButton>
          <WindowButton aria-label="Maximize"><Svg s={16} strokeWidth={1.5}><rect x={1} y={1} width={14} height={14} rx={3} /></Svg></WindowButton>
          <WindowButton aria-label="Close"><Svg s={16} strokeWidth={1.7}><path d="M.500.500l15 15M15.500.500l-15 15" /></Svg></WindowButton>
        </WindowButtons>
      </TitleBar>
      <MenuBar>{["File(F)", "VIP(V)", "Tool(T)", "Settings(S)", "PCB View settings(S)"].map(m => <MenuItem key={m}>{m}</MenuItem>)}</MenuBar>
      <Body>
        <LeftPanel>
          <SearchRow onSubmit={e => e.preventDefault()}>
            <ShrinkButton type="button">Shrink</ShrinkButton>
            <SearchBox>
              <SearchInput aria-label="Model number or PCB" placeholder="Please input the model number or PCB" />
              <Svg s={16} stroke="#a9abb2"><path d="M2 5l6 6 6-6" /></Svg>
            </SearchBox>
            <SearchButton aria-label="Search"><Svg s={20} stroke="#fff" strokeWidth={1.6}><circle cx={10} cy={10} r={8.500} /><path d="M15.500 15.500l3 3" /></Svg></SearchButton>
          </SearchRow>
          <LeftBody>
            <Categories>
              <Group $active><Legend>VIP</Legend>
                <Category><CategoryIcon name="course" />Cour...</Category>
                <Category $active><CategoryIcon name="phone" />Phone</Category>
                <Category><CategoryIcon name="computer" />Com...</Category>
              </Group>
              <Group><Legend>Custom</Legend>
                <Category><CategoryIcon name="drone" />Drone</Category>
                <Category><CategoryIcon name="game" />Gam...</Category>
                <Category><CategoryIcon name="car" />Car</Category>
              </Group>
              <Favorites><Category><CategoryIcon name="star" />Favorites</Category></Favorites>
            </Categories>
            <Tree>
              {NODES.map(([level, kind, name]) => (
                <Row key={name} $level={level}>
                  <RowButton $selected={name === SELECTED}>
                    <Slot $file={kind !== "dir"}>{kind === "dir" ? <Minus /> : kind === "pcb" ? <PcbFile /> : <PdfFile />}</Slot>{name}
                  </RowButton>
                </Row>
              ))}
            </Tree>
            <DarkRail />
            <ScrollRail><Svg s={9} stroke="#444" strokeWidth={1.2}><path d="M.500 6l4-4 4 4" /></Svg><Thumb /></ScrollRail>
          </LeftBody>
        </LeftPanel>
        <Strip><Handle aria-label="Collapse file list"><svg width={9} height={112} viewBox="0 0 9 112" aria-hidden="true"><path d="M0 0 9 14V96L0 112Z" fill="#d6e9fd" /><path d="M6 52 3 55l3 3" fill="none" stroke="#5aa9f0" /></svg></Handle></Strip>
        <Viewer>
          <Tabs>
            <Tab><Svg s={18} stroke="#111" strokeWidth={1.7}><path d="M1 9.500 9 2l8 7.500M3 8.500V17h12V8.500M7 17v-6h4v6" /></Svg>Member Center</Tab>
            <Tab $active>A3 2DC098 YiDianTong.pcb</Tab>
            <Spacer />
            <Tool aria-label="Close all tabs"><Svg s={20} stroke="#777" strokeWidth={2}><path d="M2 16V2h14" /><rect x={6} y={6} width={13} height={13} rx={2} fill="#777" stroke="none" /><path d="M9.500 9.500l6 6M15.500 9.500l-6 6" stroke="#fff" strokeWidth={1.5} /></Svg></Tool>
          </Tabs>
          <ViewerBody>
            <Stage>
              <Toolbar>
                <Tool aria-label="Split view"><Svg stroke="#333" strokeWidth={1}><path d="M1.500 1.500h7v17h-7ZM12.500 1.500h7v17h-7Z" /></Svg></Tool><Sep />
                <Tool aria-label="Zoom in"><Svg stroke="#222" strokeWidth={1.7}><circle cx={9} cy={9} r={6.800} /><path d="M14 14l4 4M6 9h6M9 6v6" /></Svg></Tool>
                <Tool aria-label="Zoom out"><Svg stroke="#444"><circle cx={9} cy={9} r={7} /><path d="M14 14l4 4M5.500 9h7" /></Svg></Tool><Sep />
                <Tool aria-label="Fit to window"><Svg stroke="#444" strokeWidth={1.3}><path d="M2.500 6V4q0-1.500 1.500-1.500h2M14 2.500h2q1.500 0 1.500 1.500v2M17.500 14v2q0 1.500-1.500 1.500h-2M6 17.500H4q-1.500 0-1.500-1.500v-2" /><circle cx={10} cy={10} r={5} /></Svg></Tool><Sep />
                <Tool aria-label="Rotate left"><Svg stroke="#333"><rect x={2} y={7} width={15} height={12} rx={1.500} /><path d="M18 5.500Q16 2.500 9 3M12 0 8.500 3 12 6" /></Svg></Tool>
                <Tool aria-label="Rotate right"><Svg stroke="#333"><rect x={3} y={7} width={15} height={12} rx={1.500} /><path d="M2 5.500Q4 2.500 11 3M8 0l3.500 3L8 6" /></Svg></Tool><Sep />
                <Tool aria-label="Format"><Svg stroke="#333"><path d="M2 2h13v5H2ZM15 4h3v6.500H9.500V13M8 13h3v5.500H8Z" /></Svg></Tool><Sep />
                <Tool aria-label="Mirror"><Svg stroke="#333" strokeWidth={1.3}><path d="M1.500 2.500v15L7 14V6ZM18.500 2.500v15L13 14V6ZM10 1v18" /></Svg></Tool>
                <Tool $on aria-label="Lamp"><Svg stroke="#f00" strokeWidth={1.4}><path d="M10 1v2M1 11q0-8 9-8t9 8ZM6 11.500q0 3 4 3t4-3M3 14l-1 2M6 15.500l-1.500 3M10 16v2.500M14 15.500l1.500 3M17 14l1 2" /></Svg></Tool>
                <Tool>3D</Tool>
                <Tool $on aria-label="Diode"><Svg s={24} stroke="#3f8ef8" strokeWidth={1.3}><path d="M0 12h24" /><path d="M8 7v10l10-5Z" fill="#3f8ef8" /><path d="M19 6v12" /></Svg></Tool>
                <Tool $on aria-label="Nets"><Svg strokeWidth={1.3}><rect x={1} y={1} width={18} height={18} rx={2} stroke="#333" /><g stroke="#0db14b"><circle cx={5} cy={5} r={2} /><path d="M6.500 6.500 18 18" /></g><g stroke="#3f8ef8"><circle cx={12.500} cy={4.500} r={1.800} /><path d="M12.500 6.500Q13 9 17 9v6" /></g><g stroke="#f02"><circle cx={4} cy={12} r={1.800} /><path d="M6 12q4 0 4 3l3 3" /></g></Svg></Tool>
                <Tool aria-label="Curve"><Svg stroke="#222"><circle cx={16.500} cy={3.500} r={2} /><circle cx={3} cy={17} r={2} /><path d="M14.500 4Q4 5 3.500 15" /></Svg></Tool><Sep />
                <Tool aria-label="Mouse"><Svg stroke="#333"><rect x={4} y={1.500} width={12} height={17} rx={5.500} /><path d="M4 9h12M8 2v7M12 2v7M10 3.500v3" /></Svg></Tool><Sep />
                <Scheme>[ColorScheme]</Scheme><Sep />
                <Tool aria-label="Show layers"><Svg stroke="#4a86da" strokeWidth={1.3}><path d="M1 10q4-6 9-6t9 6q-4 6-9 6t-9-6Z" /><circle cx={10} cy={10} r={4} /><path d="M8.500 11.500 11.500 8.500" /></Svg></Tool>
                <Spacer />
                <Tool aria-label="Side panel"><Svg s={22} stroke="#777" strokeWidth={1.7}><path d="M1 2.500h20v17H1ZM7.500 2.500v17M11 7h6M11 10.300h6M11 13.600h6M11 16.500h6" strokeWidth={1.4} /></Svg></Tool>
              </Toolbar>
              <Canvas><Board /></Canvas>
            </Stage>
            <Strip $right><Handle aria-label="Expand side panel"><svg width={9} height={164} viewBox="0 0 9 164" aria-hidden="true"><path d="M9 27 0 40V124L9 137Z" fill="#d6e9fd" stroke="#a5d2fb" /><path d="M6 80 3 83l3 3" fill="none" stroke="#5aa9f0" /></svg></Handle></Strip>
          </ViewerBody>
        </Viewer>
      </Body>
      <Footer>XZZ Schematics https://www.xzztools.com</Footer>
    </Window>
  );
}
